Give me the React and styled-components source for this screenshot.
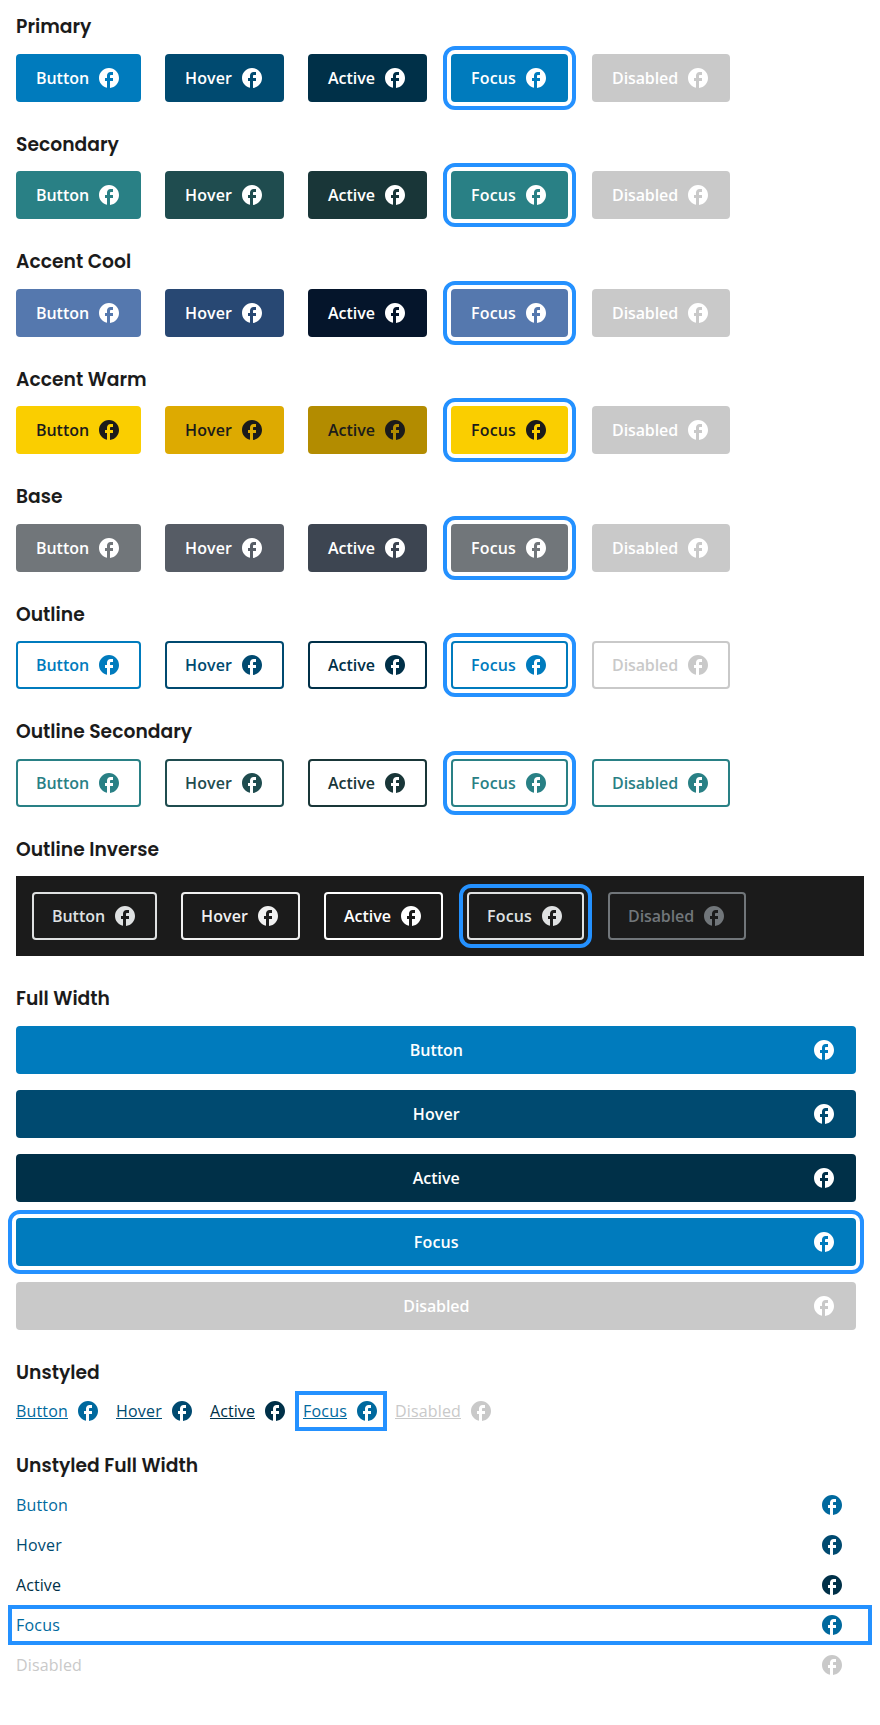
import React from 'react';
import styled, { createGlobalStyle, css } from 'styled-components';

const GlobalStyle = createGlobalStyle`
  body { margin: 0; background: #fff; color: #1b1b1b; font-family: "Open Sans", sans-serif; font-size: 16px; }
  * { box-sizing: border-box; }
`;

const Page = styled.main`
  display: flex;
  flex-direction: column;
  gap: 29.9375px;
  padding: 14.47px 16px 0;
`;

const Section = styled.section`
  display: flex;
  flex-direction: column;
  gap: 13.125px;
`;

const Heading = styled.h3`
  margin: 0;
  font: 600 18.72px/26.4px Poppins, "Open Sans", sans-serif;
  letter-spacing: 0.02px;
  white-space: nowrap;
`;

const focusRing = css`
  outline: 4px solid #2491ff;
  outline-offset: 4px;
`;

const Row = styled.div`
  display: flex;
  gap: 24px;
`;

const DarkRow = styled(Row)`
  width: 848px;
  padding: 16px;
  background: #1b1b1b;
`;

const Stack = styled.div`
  display: grid;
  gap: 16px;
  width: ${(p) => p.$width};
`;

const Icon = styled.svg`
  display: block;
  width: 24px;
  height: 24px;
  flex: none;
  fill: currentColor;
`;

const Label = styled.span`
  letter-spacing: ${(p) => p.$tracking}px;
`;

const Button = styled.button`
  display: flex;
  align-items: center;
  gap: 8px;
  height: 48px;
  padding: 0 20px;
  border: 0;
  border-radius: 4px;
  font: 600 16px/24px "Open Sans", sans-serif;
  color: ${(p) => p.$ink};
  background: ${(p) => (p.$outline ? 'transparent' : p.$fill)};
  ${(p) => p.$outline && css`box-shadow: inset 0 0 0 2px ${p.$ink};`}
  ${(p) => p.$focus && focusRing}
`;

const BlockButton = styled(Button)`
  display: grid;
  grid-template-columns: 24.6px 1fr 24px;
  gap: 0;
  & > ${Label} { grid-column: 2; text-align: center; }
`;

const LinkRow = styled(Row)`
  gap: 16px;
`;

const LinkButton = styled.button`
  display: flex;
  align-items: center;
  gap: 8px;
  height: 24px;
  padding: 0;
  border: 0;
  background: none;
  font: 400 16px/24px "Open Sans", sans-serif;
  color: ${(p) => p.$ink};
  & > ${Label} { text-decoration: underline; }
  ${(p) => p.$focus && focusRing}
`;

const BlockLink = styled(LinkButton)`
  justify-content: space-between;
  padding-right: 20px;
  & > ${Label} { text-decoration: none; }
`;

const Facebook = () => (
  <Icon viewBox="0 0 24 24" aria-hidden="true">
    <path d="M22 12c0-5.52-4.48-10-10-10S2 6.48 2 12c0 4.84 3.44 8.87 8 9.8V15H8v-3h2V9.5C10 7.57 11.57 6 13.5 6H16v3h-2c-.55 0-1 .45-1 1v2h3v3h-3v6.95c5.05-.5 9-4.76 9-9.95z" />
  </Icon>
);

const STATES = ['Button', 'Hover', 'Active', 'Focus', 'Disabled'];
const SEMIBOLD_TRACKING = [-0.05, 0.106, -0.013, 0.162, -0.107];
const REGULAR_TRACKING = [0.167, 0.212, 0.083, 0.204, 0.154];

const SOLID = [
  { title: 'Primary', fills: ['#007bbd', '#004a70', '#003048', '#007bbd'] },
  { title: 'Secondary', fills: ['#298085', '#1f4c4f', '#193638', '#298085'] },
  { title: 'Accent Cool', fills: ['#5578ae', '#284873', '#05152b', '#5578ae'] },
  { title: 'Accent Warm', fills: ['#face00', '#ddaa01', '#b38c00', '#face00'], ink: '#1b1b1b' },
  { title: 'Base', fills: ['#71767a', '#565c65', '#3d4551', '#71767a'] },
];

const OUTLINE = [
  { title: 'Outline', inks: ['#007bbd', '#004a70', '#003048', '#007bbd', '#c9c9c9'] },
  { title: 'Outline Secondary', inks: ['#298085', '#1f4c4f', '#193638', '#298085', '#298085'] },
];

const INVERSE = ['#dfe1e2', '#f0f0f0', '#ffffff', '#dfe1e2', '#71767a'];
const LINKS = ['#00699e', '#004a70', '#003048', '#00699e', '#c9c9c9'];
const FULL = [...SOLID[0].fills, '#c9c9c9'];

const each = (Kind, props, tracking = SEMIBOLD_TRACKING) =>
  STATES.map((label, i) => (
    <Kind key={label} type="button" $focus={label === 'Focus'} {...props(i)}>
      <Label $tracking={tracking[i]}>{label}</Label>
      <Facebook />
    </Kind>
  ));

export default function App() {
  return (
    <>
      <GlobalStyle />
      <Page>
        {SOLID.map(({ title, fills, ink = '#fff' }) => (
          <Section key={title}>
            <Heading>{title}</Heading>
            <Row>{each(Button, (i) => ({ $fill: fills[i] ?? '#c9c9c9', $ink: i === 4 ? '#fff' : ink }))}</Row>
          </Section>
        ))}
        {OUTLINE.map(({ title, inks }) => (
          <Section key={title}>
            <Heading>{title}</Heading>
            <Row>{each(Button, (i) => ({ $outline: true, $ink: inks[i] }))}</Row>
          </Section>
        ))}
        <Section>
          <Heading>Outline Inverse</Heading>
          <DarkRow>{each(Button, (i) => ({ $outline: true, $ink: INVERSE[i] }))}</DarkRow>
        </Section>
        <Section>
          <Heading>Full Width</Heading>
          <Stack $width="840px">{each(BlockButton, (i) => ({ $fill: FULL[i], $ink: '#fff' }))}</Stack>
        </Section>
        <Section>
          <Heading>Unstyled</Heading>
          <LinkRow>{each(LinkButton, (i) => ({ $ink: LINKS[i] }), REGULAR_TRACKING)}</LinkRow>
        </Section>
        <Section>
          <Heading>Unstyled Full Width</Heading>
          <Stack $width="848px">{each(BlockLink, (i) => ({ $ink: LINKS[i] }), REGULAR_TRACKING)}</Stack>
        </Section>
      </Page>
    </>
  );
}
